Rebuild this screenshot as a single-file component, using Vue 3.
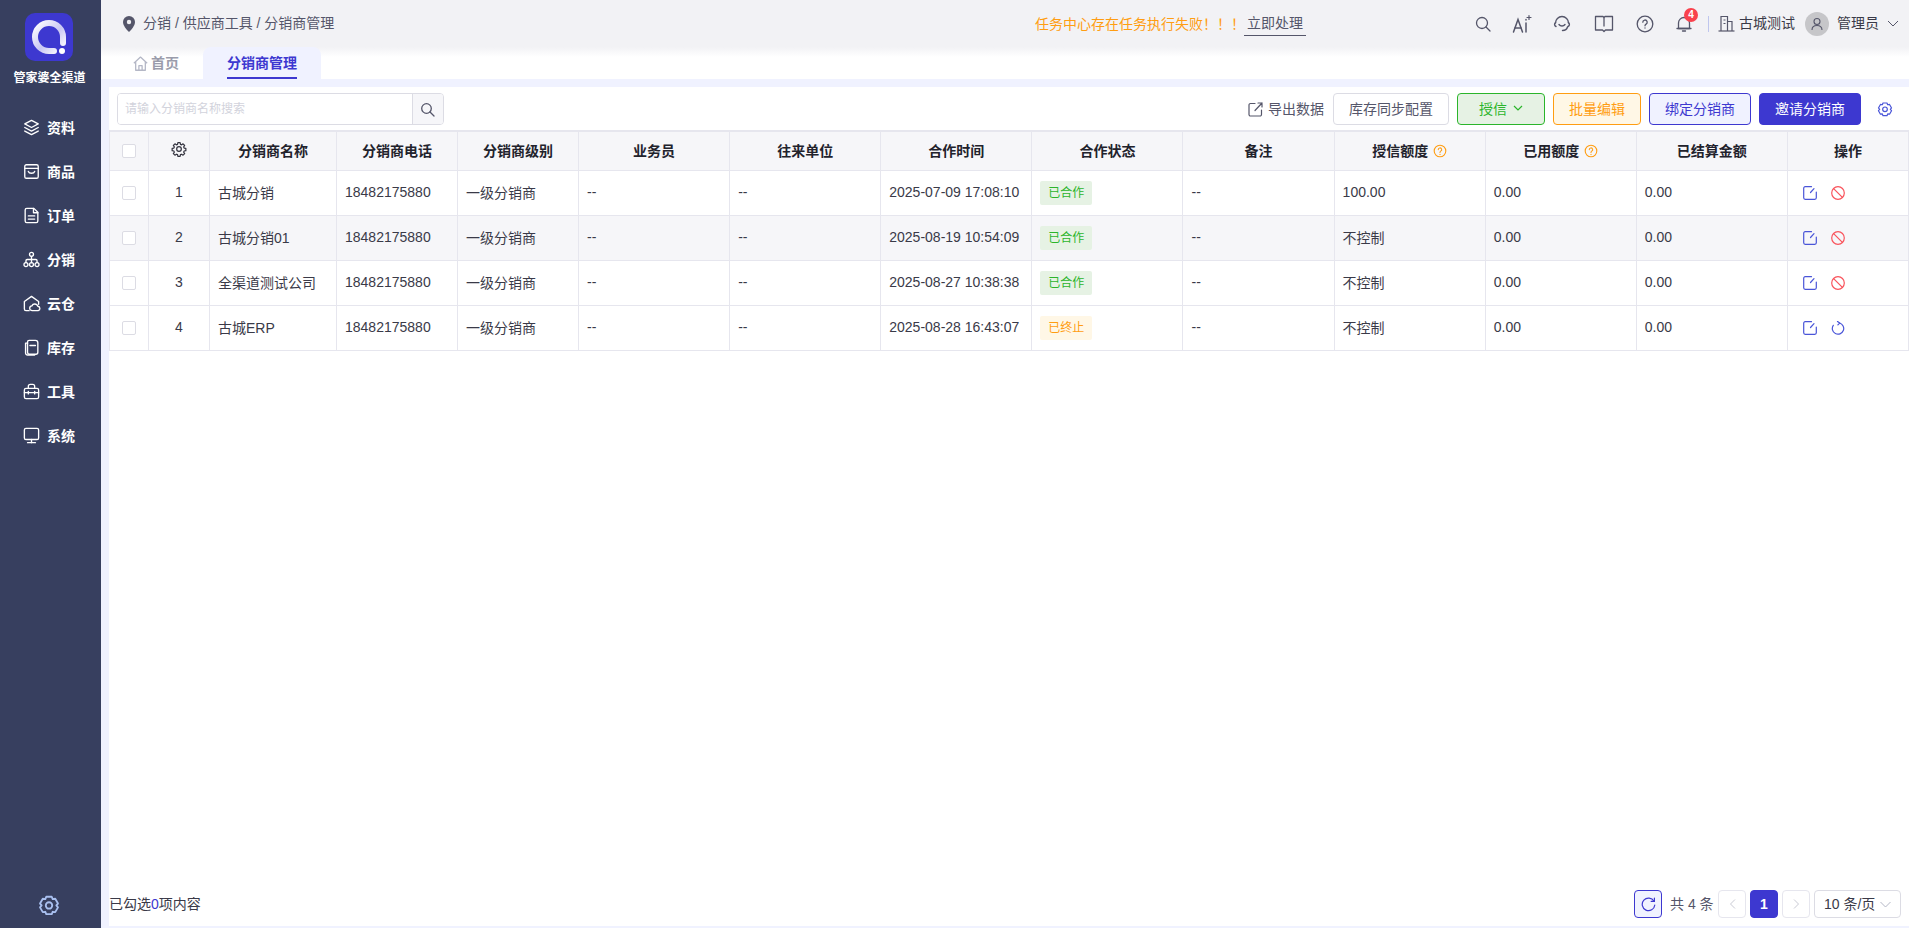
<script setup>
const navItems = [
  { label: "资料", paths: ["M12 3 3.5 7.5 12 12l8.5-4.5Z", "M3.5 12 12 16.5 20.5 12", "M3.5 16.5 12 21l8.5-4.5"] },
  { label: "商品", paths: ["M5.5 3.5h13a2 2 0 0 1 2 2v13a2 2 0 0 1-2 2h-13a2 2 0 0 1-2-2v-13a2 2 0 0 1 2-2Z", "M3.5 8h17", "M8 12c1 3 7 3 8 0"] },
  { label: "订单", paths: ["M6 3h9l5 5v11a2 2 0 0 1-2 2H6a2 2 0 0 1-2-2V5a2 2 0 0 1 2-2Z", "M14.500 3v5.500H20", "M8 12.500h8", "M8 16.500h8"] },
  { label: "分销", paths: ["M12 3a2.500 2.500 0 1 1 0 5 2.500 2.500 0 0 1 0-5Z", "M5 16a2.500 2.500 0 1 1 0 5 2.500 2.500 0 0 1 0-5Z", "M12 16a2.500 2.500 0 1 1 0 5 2.500 2.500 0 0 1 0-5Z", "M19 16a2.500 2.500 0 1 1 0 5 2.500 2.500 0 0 1 0-5Z", "M12 8v8", "M5 16v-2.500c0-1 .8-1.500 1.500-1.500h11c.8 0 1.500.5 1.500 1.500V16"] },
  { label: "云仓", paths: ["M9 21H5a2 2 0 0 1-2-2V9.500L12 3l9 6.500V13", "M13 21a3 3 0 0 1-.5-6 4 4 0 0 1 7.500.5 2.800 2.800 0 0 1 .5 5.500Z"] },
  { label: "库存", paths: ["M9 3h8a3 3 0 0 1 3 3v12a2.500 2.500 0 0 1-2.500 2.500h-8A2.500 2.500 0 0 1 7 18V5a2 2 0 0 1 2-2Z", "M10 9.500h7", "M7 6.500H4.500V19A2.500 2.500 0 0 0 7 21.500h9"] },
  { label: "工具", paths: ["M8 8V5.500A2.500 2.500 0 0 1 10.500 3h3A2.500 2.500 0 0 1 16 5.500V8", "M5 8h14a2 2 0 0 1 2 2v9a2 2 0 0 1-2 2H5a2 2 0 0 1-2-2v-9a2 2 0 0 1 2-2Z", "M3 13.500h18", "M8 12v3", "M16 12v3"] },
  { label: "系统", paths: ["M5 3h14a2 2 0 0 1 2 2v10a2 2 0 0 1-2 2H5a2 2 0 0 1-2-2V5a2 2 0 0 1 2-2Z", "M12 17v4", "M7 21h10"] },
];

const columns = [
  { title: "分销商名称", width: 127 },
  { title: "分销商电话", width: 121 },
  { title: "分销商级别", width: 121 },
  { title: "业务员", width: 151.1 },
  { title: "往来单位", width: 151.1 },
  { title: "合作时间", width: 151.1 },
  { title: "合作状态", width: 151.1 },
  { title: "备注", width: 151.1 },
  { title: "授信额度", width: 151.1, tip: true },
  { title: "已用额度", width: 151.1, tip: true },
  { title: "已结算金额", width: 151.1 },
  { title: "操作", width: 121 },
];

const rows = [
  { id: 1, name: "古城分销", time: "2025-07-09 17:08:10", active: true, credit: "100.00" },
  { id: 2, name: "古城分销01", time: "2025-08-19 10:54:09", active: true, credit: "不控制" },
  { id: 3, name: "全渠道测试公司", time: "2025-08-27 10:38:38", active: true, credit: "不控制" },
  { id: 4, name: "古城ERP", time: "2025-08-28 16:43:07", active: false, credit: "不控制" },
];

const gearPath = "M10.300 2.500h3.400l.5 2.600 1.700.7 2.200-1.500 2.400 2.400-1.500 2.200.7 1.700 2.600.5v3.400l-2.600.5-.7 1.700 1.500 2.200-2.400 2.400-2.200-1.500-1.700.7-.5 2.600h-3.400l-.5-2.600-1.700-.7-2.200 1.500-2.400-2.400 1.500-2.200-.7-1.700-2.600-.5v-3.400l2.600-.5.7-1.700-1.500-2.200 2.400-2.400 2.200 1.500 1.700-.7Z";
</script>

<template>
  <div class="page">
    <aside class="sidebar">
      <svg class="logo" width="48" height="48" viewBox="0 0 48 48">
        <defs>
          <linearGradient id="logoRing" x1="0" y1="0" x2="1" y2="1">
            <stop offset="0" stop-color="#ffffff" />
            <stop offset="0.55" stop-color="#c9c7f3" />
            <stop offset="1" stop-color="#ffffff" />
          </linearGradient>
        </defs>
        <rect width="48" height="48" rx="10" fill="#3d38d0" />
        <path d="M38 30v-6a14 14 0 1 0-14 14h5" fill="none" stroke="url(#logoRing)" stroke-width="6" stroke-linecap="round" />
        <circle cx="37" cy="38" r="3" fill="#fff" />
      </svg>
      <div class="brand">管家婆全渠道</div>
      <nav class="nav">
        <a v-for="item in navItems" :key="item.label" class="nav-item">
          <svg width="19" height="19" viewBox="0 0 24 24" fill="none" stroke="#fff" stroke-width="1.700" stroke-linejoin="round" stroke-linecap="round">
            <path v-for="d in item.paths" :key="d" :d="d" />
          </svg>
          <span>{{ item.label }}</span>
        </a>
      </nav>
      <svg class="side-gear" width="22" height="22" viewBox="0 0 24 24" fill="none" stroke="#a9c0f0" stroke-width="2" stroke-linejoin="round">
        <path d="M9 3h6l1 2.600 2.800-.4 3 5.200L20 12.500l1.800 2.100-3 5.200-2.800-.4L15 22H9l-1-2.600-2.800.4-3-5.200L4 12.500 2.200 10.400l3-5.200 2.800.4Z" />
        <circle cx="12" cy="12.500" r="3.500" />
      </svg>
    </aside>

    <div class="main">
      <header class="topbar">
        <div class="crumbs">
          <svg width="14" height="16" viewBox="0 0 14 16"><path d="M7 0a6 6 0 0 1 6 6c0 3.500-3.500 7.500-6 10C4.500 13.500 1 9.500 1 6a6 6 0 0 1 6-6Z" fill="#55566a" /><circle cx="7" cy="6" r="2.200" fill="#f2f2f5" /></svg>
          <span class="raise">分销 / 供应商工具 / 分销商管理</span>
        </div>
        <div class="notice">
          <span class="notice-text">任务中心存在任务执行失败！！！</span>
          <a class="notice-link">立即处理</a>
        </div>
        <div class="tools">
          <svg class="tool gap-20" width="18" height="18" viewBox="0 0 18 18" fill="none" stroke="#55566a" stroke-width="1.300" stroke-linecap="round"><circle cx="8" cy="8" r="5.500" /><path d="m12 12 4 4" /></svg>
          <svg class="tool gap-20" width="20" height="20" viewBox="0 0 20 20" fill="none" stroke="#55566a" stroke-width="1.500" stroke-linecap="round"><path d="M1.500 18 6 5.500 10.500 18" /><path d="M3 14h6" /><path d="M14 9v9" /><path d="M14 5.500v.5" /><path d="M17 1.500v4M15 3.500h4" stroke-width="1.200" /></svg>
          <svg class="tool" width="20" height="20" viewBox="0 0 20 20" fill="none" stroke="#55566a" stroke-width="1.400" stroke-linecap="round"><path d="M3.500 9a6.500 6.500 0 0 1 13 0" /><path d="M3.500 8.500c-1.300 1-1.300 3.300.5 4" /><path d="M16.500 8.500c1.300 1 1.300 3.300-.5 4" /><path d="M7 10.500c1.500 2 4.500 2 6 0" /><path d="M15.500 13c-.5 2-2.500 3.500-5 3.500" /></svg>
          <svg class="tool" width="20" height="20" viewBox="0 0 20 20" fill="none" stroke="#55566a" stroke-width="1.300" stroke-linejoin="round"><path d="M1.500 2.500H9l1 1 1-1h7.500v13.500h-7L10 17.500 8.500 16h-7Z" /><path d="M10 3.500v9" /></svg>
          <svg class="tool gap-21" width="18" height="18" viewBox="0 0 18 18" fill="none" stroke="#55566a" stroke-width="1.300" stroke-linecap="round"><circle cx="9" cy="9" r="7.800" /><path d="M6.800 7.200a2.200 2.200 0 1 1 3.300 1.900c-.7.400-1.100.8-1.100 1.700" /><path d="M9 13v.1" /></svg>
          <div class="bell">
            <svg width="18" height="18" viewBox="0 0 18 18" fill="none" stroke="#55566a" stroke-width="1.300" stroke-linejoin="round" stroke-linecap="round"><path d="M3.500 13.500V8a5.500 5.500 0 0 1 11 0v5.500Z" /><path d="M2 13.500h14" /><path d="M7.500 16h3" /></svg>
            <span class="badge">4</span>
          </div>
          <span class="divider"></span>
          <svg width="17" height="17" viewBox="0 0 17 17" fill="none" stroke="#55566a" stroke-width="1.200"><path d="M3 16V1.500h6.500V16" /><path d="M9.500 6.500H14V16" /><path d="M0.500 16h16" /><path d="M5.500 5h2M5.500 8.500h2" /></svg>
          <span class="company raise">古城测试</span>
          <span class="avatar">
            <svg width="14" height="14" viewBox="0 0 14 14" fill="none" stroke="#55566a" stroke-width="1.100"><circle cx="7" cy="4.500" r="3" /><path d="M2 13c0-3 2-4.500 5-4.500s5 1.500 5 4.500" /></svg>
          </span>
          <span class="user raise">管理员</span>
          <svg class="user-arrow" width="12" height="8" viewBox="0 0 12 8" fill="none" stroke="#55566a" stroke-width="1"><path d="m1 1 5 5 5-5" /></svg>
        </div>
      </header>

      <div class="tabs">
        <div class="tab">
          <svg width="15" height="15" viewBox="0 0 14 14" fill="none" stroke="#b4b7c6" stroke-width="1.200" stroke-linejoin="round"><path d="M.8 6.800 7 1l6.200 5.800" /><path d="M2.500 5.500v7.800h9V5.500" /><path d="M5.500 13.300V9h3v4.300" /></svg>
          <span>首页</span>
        </div>
        <div class="tab active"><span>分销商管理</span></div>
      </div>

      <section class="content">
        <div class="toolbar">
          <div class="search">
            <input class="search-input" placeholder="请输入分销商名称搜索" />
            <button class="search-btn">
              <svg width="15" height="15" viewBox="0 0 15 15" fill="none" stroke="#55566a" stroke-width="1.300" stroke-linecap="round"><circle cx="6.500" cy="6.500" r="4.800" /><path d="m10 10 4 4" /></svg>
            </button>
          </div>
          <div class="actions">
            <a class="export">
              <svg width="15" height="15" viewBox="0 0 15 15" fill="none" stroke="#55566a" stroke-width="1.200" stroke-linecap="round"><path d="M7 1.500H2.500a1.500 1.500 0 0 0-1.500 1.500v9.500A1.500 1.500 0 0 0 2.500 14H12a1.500 1.500 0 0 0 1.500-1.500V8" /><path d="M7 8.500 14 1M10 1h4v4" /></svg>
              <span class="raise">导出数据</span>
            </a>
            <button class="btn">库存同步配置</button>
            <button class="btn green">
              授信
              <svg width="10" height="6" viewBox="0 0 10 6" fill="none" stroke="#2bb52b" stroke-width="1.200"><path d="m1 1 4 4 4-4" /></svg>
            </button>
            <button class="btn orange">批量编辑</button>
            <button class="btn outline">绑定分销商</button>
            <button class="btn primary">邀请分销商</button>
            <svg class="set" width="16" height="16" viewBox="0 0 24 24" fill="none" stroke="#4a55d8" stroke-width="1.800" stroke-linejoin="round">
              <path d="M9 3h6l1 2.600 2.800-.4 3 5.200L20 12.500l1.800 2.100-3 5.200-2.800-.4L15 22H9l-1-2.600-2.800.4-3-5.200L4 12.500 2.200 10.400l3-5.200 2.800.4Z" />
              <circle cx="12" cy="12.500" r="3.500" />
            </svg>
          </div>
        </div>

        <div class="table-wrap">
          <table class="grid">
            <colgroup>
              <col style="width: 40px" />
              <col style="width: 61px" />
              <col v-for="c in columns" :key="c.title" :style="{ width: c.width + 'px' }" />
            </colgroup>
            <thead>
              <tr>
                <th><span class="check"></span></th>
                <th>
                  <svg class="head-gear" width="16" height="16" viewBox="0 0 24 24" fill="none" stroke="#33333f" stroke-width="1.800" stroke-linejoin="round">
                    <path :d="gearPath" />
                    <circle cx="12" cy="12" r="3.500" />
                  </svg>
                </th>
                <th v-for="c in columns" :key="c.title" class="head-text">
                  {{ c.title }}
                  <svg v-if="c.tip" class="tip" width="14" height="14" viewBox="0 0 14 14" fill="none" stroke="#ff9d12" stroke-width="1.100" stroke-linecap="round"><circle cx="7" cy="7" r="5.800" /><path d="M5.300 5.600a1.700 1.700 0 1 1 2.500 1.500c-.5.300-.8.600-.8 1.300" /><path d="M7 10.300v.1" /></svg>
                </th>
              </tr>
            </thead>
            <tbody>
              <tr v-for="row in rows" :key="row.id">
                <td class="center"><span class="check"></span></td>
                <td class="center num">{{ row.id }}</td>
                <td class="text">{{ row.name }}</td>
                <td class="text">18482175880</td>
                <td class="text">一级分销商</td>
                <td class="text">--</td>
                <td class="text">--</td>
                <td class="text">{{ row.time }}</td>
                <td><span class="tag" :class="{ stopped: !row.active }">{{ row.active ? "已合作" : "已终止" }}</span></td>
                <td class="text">--</td>
                <td class="text">{{ row.credit }}</td>
                <td class="text">0.00</td>
                <td class="text">0.00</td>
                <td class="ops">
                  <div class="ops-row">
                    <svg width="14" height="14" viewBox="0 0 14 14" fill="none" stroke="#4a55d8" stroke-width="1.200" stroke-linecap="round"><path d="M8.500 .7H2.200A1.500 1.500 0 0 0 .7 2.200v9.600a1.500 1.500 0 0 0 1.500 1.500h9.600a1.500 1.500 0 0 0 1.500-1.500V6" /><path d="m7.500 6.500 3.500-3.800" /></svg>
                    <svg v-if="row.active" width="14" height="14" viewBox="0 0 14 14" fill="none" stroke="#f9545c" stroke-width="1.200"><circle cx="7" cy="7" r="6.300" /><path d="m2.600 2.600 8.800 8.800" /></svg>
                    <svg v-else width="14" height="14" viewBox="0 0 14 14" fill="none" stroke="#4a55d8" stroke-width="1.200" stroke-linecap="round"><path d="M8.500 2A5.700 5.700 0 1 1 2.300 4.300" /><path d="M6.500.4 8.700 2 6.900 3.800" /></svg>
                  </div>
                </td>
              </tr>
            </tbody>
          </table>
        </div>

        <footer class="footer">
          <div class="picked">已勾选<em>0</em>项内容</div>
          <div class="pager">
            <button class="pg refresh">
              <svg width="15" height="15" viewBox="0 0 15 15" fill="none" stroke="#3d38d0" stroke-width="1.200" stroke-linecap="round"><path d="M13 4.200A6.300 6.300 0 1 0 13.800 8" /><path d="M13.400 1.200v3.200h-3.200" /></svg>
            </button>
            <span class="total raise">共 4 条</span>
            <button class="pg">
              <svg width="7" height="10" viewBox="0 0 7 10" fill="none" stroke="#c8c9d3" stroke-width="1"><path d="M6 .5 1.500 5 6 9.500" /></svg>
            </button>
            <button class="pg current">1</button>
            <button class="pg">
              <svg width="7" height="10" viewBox="0 0 7 10" fill="none" stroke="#c8c9d3" stroke-width="1"><path d="M1 .5 5.500 5 1 9.500" /></svg>
            </button>
            <div class="size">
              <span class="raise">10 条/页</span>
              <svg width="11" height="7" viewBox="0 0 11 7" fill="none" stroke="#b4b7c6" stroke-width="1"><path d="m.5 1 5 5 5-5" /></svg>
            </div>
          </div>
        </footer>
      </section>
    </div>
  </div>
</template>

<style>
html,
body {
  margin: 0;
  overflow: hidden;
}
</style>

<style scoped>
.page {
  display: flex;
  width: 1909px;
  height: 928px;
  font-family: "Liberation Sans", "Noto Sans CJK SC", sans-serif;
  font-size: 14px;
  color: #3a3a48;
  background: #f0f2ff;
}

.raise {
  padding-bottom: 3px;
}

.sidebar {
  flex: none;
  width: 101px;
  display: flex;
  flex-direction: column;
  align-items: center;
  padding-top: 13px;
  box-sizing: border-box;
  background: #373f5f;
  color: #fff;
}

.logo {
  display: block;
  margin-right: 3px;
}

.brand {
  margin-top: 9px;
  margin-right: 2px;
  font-size: 12px;
  line-height: 17px;
  font-weight: 700;
}

.nav {
  width: 100%;
  margin-top: 18px;
}

.nav-item {
  display: flex;
  align-items: center;
  gap: 6px;
  height: 44px;
  padding-left: 22px;
  font-weight: 700;
}

.side-gear {
  margin-top: auto;
  margin-right: 3px;
  margin-bottom: 12px;
}

.main {
  flex: 1;
  min-width: 0;
  display: flex;
  flex-direction: column;
}

.topbar {
  flex: none;
  height: 47px;
  display: flex;
  align-items: center;
  padding-left: 21px;
  background: #f2f2f5;
}

.crumbs {
  display: flex;
  align-items: center;
  gap: 7px;
  width: 913px;
  color: #55566a;
}

.notice {
  display: flex;
  align-items: center;
}

.notice-text {
  padding-bottom: 2px;
  color: #ff9d12;
}

.notice-link {
  margin-left: -1px;
  padding: 0 3px 3px;
  border-bottom: 1px solid #55566a;
  color: #55566a;
}

.tools {
  display: flex;
  align-items: center;
  margin-left: auto;
  padding-right: 10px;
}

.tool {
  margin-right: 22px;
}

.tool.gap-20 {
  margin-right: 20px;
}

.tool.gap-21 {
  margin-right: 21px;
}

.bell {
  position: relative;
  display: flex;
}

.badge {
  position: absolute;
  top: -7px;
  left: 9px;
  width: 14px;
  height: 14px;
  border-radius: 50%;
  background: #f9424d;
  color: #fff;
  font-size: 10px;
  font-weight: 700;
  line-height: 14px;
  text-align: center;
}

.divider {
  width: 1px;
  height: 16px;
  margin: 0 9px 0 15px;
  background: #bfc6ee;
}

.company {
  margin-left: 4px;
  color: #3a3a48;
}

.avatar {
  display: flex;
  align-items: center;
  justify-content: center;
  width: 24px;
  height: 24px;
  margin-left: 10px;
  border-radius: 50%;
  background: #c6c6c9;
}

.user {
  margin-left: 8px;
  color: #3a3a48;
}

.user-arrow {
  margin-left: 8px;
}

.tabs {
  flex: none;
  height: 32px;
  display: flex;
  padding-left: 8px;
  background: linear-gradient(#f2f2f5, #fff 10px);
}

.tab {
  display: flex;
  align-items: center;
  gap: 3px;
  padding: 0 24px;
  font-weight: 700;
  color: #9a9cab;
}

.tab span {
  padding-bottom: 2px;
}

.tab.active {
  border-radius: 8px 8px 0 0;
  background: #f0f2ff;
  color: #3d38d0;
}

.tab.active span {
  align-self: stretch;
  display: flex;
  align-items: center;
  padding-bottom: 1px;
  border-bottom: 2px solid #3d38d0;
}

.content {
  flex: 1;
  min-height: 0;
  display: flex;
  flex-direction: column;
  margin: 8px 0 2px 8px;
  background: #fff;
}

.toolbar {
  flex: none;
  height: 43px;
  display: flex;
  align-items: flex-start;
  justify-content: space-between;
  padding: 6px 0 0 8px;
  box-sizing: border-box;
}

.search {
  display: flex;
  width: 327px;
  height: 32px;
  box-sizing: border-box;
  border: 1px solid #dcdce4;
  border-radius: 4px;
  overflow: hidden;
}

.search-input {
  flex: 1;
  min-width: 0;
  padding: 0 8px 0 7px;
  border: 0;
  outline: 0;
  font: inherit;
  font-size: 12px;
}

.search-input::placeholder {
  color: #d2d3dc;
}

.search-btn {
  flex: none;
  width: 31px;
  display: flex;
  align-items: center;
  justify-content: center;
  padding: 0 2px 0 0;
  border: 0;
  border-left: 1px solid #dcdce4;
  background: #f6f6f9;
}

.actions {
  display: flex;
  align-items: center;
  gap: 8px;
  padding-right: 16px;
}

.export {
  display: flex;
  align-items: center;
  gap: 5px;
  margin-right: 1px;
  color: #55566a;
}

.btn {
  display: flex;
  align-items: center;
  justify-content: center;
  gap: 6px;
  height: 32px;
  padding: 0 15px 2px;
  box-sizing: border-box;
  border: 1px solid #dcdce4;
  border-radius: 4px;
  background: #fff;
  font: inherit;
  color: #55566a;
}

.btn.green {
  width: 88px;
  border-color: #2bb52b;
  background: #e6f2e4;
  color: #2bb52b;
}

.btn.orange {
  border-color: #ff9d12;
  background: #fff7e6;
  color: #ff9d12;
}

.btn.outline {
  border-color: #3d38d0;
  background: #f0f2ff;
  color: #3d38d0;
}

.btn.primary {
  border-color: #3d38d0;
  background: #3d38d0;
  color: #fff;
}

.set {
  margin-left: 8px;
}

.table-wrap {
  flex: 1;
  min-height: 0;
}

.grid {
  width: 1800px;
  table-layout: fixed;
  border-collapse: separate;
  border-spacing: 0;
  border-top: 2px solid #e6e6ee;
}

.grid th,
.grid td {
  box-sizing: border-box;
  border-right: 1px solid #e6e6ee;
  border-bottom: 1px solid #e6e6ee;
}

.grid th:first-child,
.grid td:first-child {
  border-left: 1px solid #e6e6ee;
}

.grid th {
  height: 39px;
  padding: 0;
  background: #f6f6f9;
  font-weight: 700;
  color: #22222c;
  text-align: center;
}

.grid th.head-text {
  padding-bottom: 2px;
}

.grid td {
  height: 45px;
  padding: 0 8px;
  white-space: nowrap;
}

.grid td.text {
  padding-bottom: 3px;
}

.grid td.center {
  padding: 0;
  text-align: center;
}

.grid td.num {
  padding-bottom: 2px;
}

.grid tbody tr:nth-child(2) td {
  background: #f6f6f9;
}

.check {
  display: block;
  width: 14px;
  height: 14px;
  margin: 0 auto;
  box-sizing: border-box;
  border: 1px solid #dcdce4;
  border-radius: 2px;
  background: #fff;
}

.head-gear {
  display: block;
  margin: -4px auto 0;
}

.tip {
  margin-left: 1px;
  vertical-align: -2px;
}

.tag {
  display: inline-block;
  width: 52px;
  height: 24px;
  border-radius: 2px;
  background: #e6f2e4;
  color: #2bb52b;
  font-size: 12px;
  line-height: 24px;
  text-align: center;
  vertical-align: middle;
}

.tag.stopped {
  background: #fff7e6;
  color: #ff9d12;
}

.grid td.ops {
  padding: 0 0 0 15px;
}

.ops-row {
  display: flex;
  gap: 14px;
}

.footer {
  flex: none;
  height: 36px;
  display: flex;
  align-items: center;
  justify-content: space-between;
  padding: 0 8px 8px 0;
  box-sizing: border-box;
}

.picked {
  padding-bottom: 2px;
}

.picked em {
  font-style: normal;
  color: #3d38d0;
}

.pager {
  display: flex;
  align-items: center;
  gap: 4px;
}

.pg {
  display: flex;
  align-items: center;
  justify-content: center;
  width: 28px;
  height: 28px;
  padding: 0;
  box-sizing: border-box;
  border: 1px solid #e6e6ee;
  border-radius: 4px;
  background: #fff;
  font: inherit;
}

.pg.refresh {
  border-color: #3d38d0;
  background: #f0f2ff;
}

.pg.current {
  border-color: #3d38d0;
  background: #3d38d0;
  color: #fff;
  font-weight: 700;
}

.total {
  margin: 0 0 0 4px;
  width: 44px;
  color: #55566a;
}

.size {
  display: flex;
  align-items: center;
  justify-content: space-between;
  width: 87px;
  height: 28px;
  padding: 0 9px;
  box-sizing: border-box;
  border: 1px solid #dcdce4;
  border-radius: 4px;
}
</style>
